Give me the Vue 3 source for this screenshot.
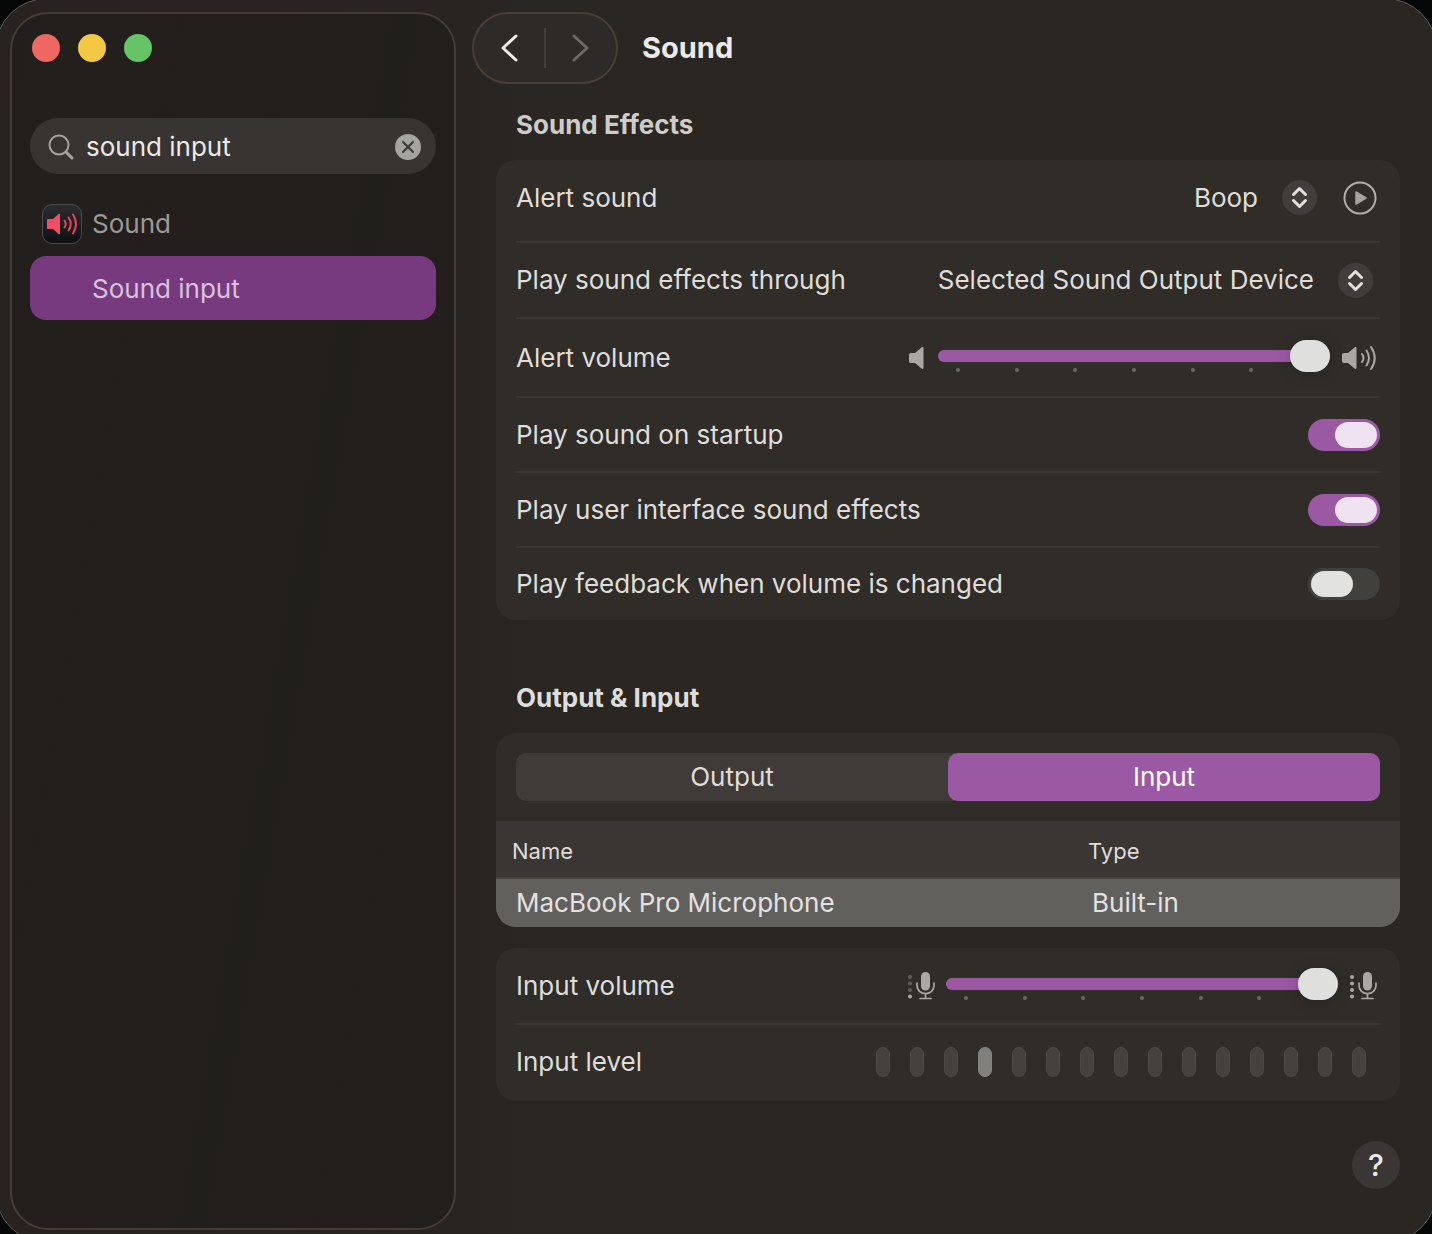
<script setup>
import { ref } from 'vue'

const query = ref('sound input')
const alertSound = ref('Boop')
const outputDevice = ref('Selected Sound Output Device')
const alertVolume = ref(100)
const inputVolume = ref(100)
const tab = ref('Input')
const level = 4

const toggles = ref([
  { id: 'startup', label: 'Play sound on startup', on: true },
  { id: 'interface', label: 'Play user interface sound effects', on: true },
  { id: 'feedback', label: 'Play feedback when volume is changed', on: false },
])
</script>

<template>
  <div class="desktop">
    <div class="window">
      <aside class="sidebar">
        <div class="lights">
          <button class="light red" aria-label="Close"></button>
          <button class="light yellow" aria-label="Minimize"></button>
          <button class="light green" aria-label="Zoom"></button>
        </div>
        <div class="search">
          <svg width="28" height="28" viewBox="0 0 28 28" fill="none" stroke="#a5a3a0" stroke-linecap="round">
            <circle cx="11" cy="12" r="9.5" stroke-width="2" />
            <path d="M18 19l6 6" stroke-width="3" />
          </svg>
          <input v-model="query" type="text" aria-label="Search" />
          <button class="clear" aria-label="Clear search" @click="query = ''">
            <svg width="26" height="26" viewBox="0 0 26 26">
              <circle cx="13" cy="13" r="13" fill="#a6a4a1" />
              <path d="M8 8l10 10M18 8L8 18" stroke="#393633" stroke-width="2" stroke-linecap="round" />
            </svg>
          </button>
        </div>
        <nav class="results">
          <a href="#sound" class="result">
            <span class="app-icon">
              <svg width="32" height="24" viewBox="0 0 32 24">
                <path d="M2 7h5l5.500-5c.7-.6 1.500-.2 1.500.7v18.600c0 .9-.8 1.300-1.500.7L7 17H2c-.9 0-1-.4-1-1V8c0-.6.1-1 1-1z" fill="#f54c66" />
                <g fill="none" stroke="#e2475f" stroke-width="2" stroke-linecap="round">
                  <path d="M18.500 8.500q2.500 3.500 0 7M22.500 5.500q4.500 6.500 0 13M27 2.500q6 9.500 0 19" />
                </g>
              </svg>
            </span>
            Sound
          </a>
          <a href="#input" class="result selected">Sound input</a>
        </nav>
      </aside>

      <main class="main">
        <header class="toolbar">
          <div class="pager">
            <button aria-label="Back">
              <svg width="20" height="32" viewBox="0 0 20 32"><path d="M17 4L4 16l13 12" stroke="#efedeb" /></svg>
            </button>
            <span class="rule"></span>
            <button aria-label="Forward">
              <svg width="20" height="32" viewBox="0 0 20 32"><path d="M3 4l13 12L3 28" stroke="#6c6966" /></svg>
            </button>
          </div>
          <h1>Sound</h1>
        </header>

        <div class="content">
          <h2 class="dim">Sound Effects</h2>
          <section class="card">
            <div class="row tall">
              <label for="alert-sound">Alert sound</label>
              <div class="controls end-play">
                <span class="popup">
                  <select id="alert-sound" v-model="alertSound"><option>Boop</option></select>
                  <svg class="updown" width="35" height="35" viewBox="0 0 35 35"><path d="M11.500 14.500l6-6 6 6M11.500 20.500l6 6 6-6" /></svg>
                </span>
                <button class="play" aria-label="Play alert sound">
                  <svg width="34" height="34" viewBox="0 0 34 34">
                    <circle cx="17" cy="17" r="15.500" fill="none" stroke="#b0aeab" stroke-width="2" />
                    <path d="M13 11l10 6-10 6z" fill="#a5a3a0" stroke="#a5a3a0" stroke-width="1.500" stroke-linejoin="round" />
                  </svg>
                </button>
              </div>
            </div>
            <div class="row device">
              <label for="device">Play sound effects through</label>
              <div class="controls end-popup">
                <span class="popup">
                  <select id="device" v-model="outputDevice"><option>Selected Sound Output Device</option></select>
                  <svg class="updown" width="35" height="35" viewBox="0 0 35 35"><path d="M11.500 14.500l6-6 6 6M11.500 20.500l6 6 6-6" /></svg>
                </span>
              </div>
            </div>
            <div class="row volume">
              <label for="alert-volume">Alert volume</label>
              <div class="controls slider-set">
                <svg width="18" height="24" viewBox="0 0 18 24"><path d="M3 7h4l6.500-5.500c.9-.8 2-.4 2 .8v19.400c0 1.200-1.100 1.600-2 .8L7 17H3c-1.500 0-2-.7-2-2V9c0-1.300.5-2 2-2z" fill="#aaa8a5" /></svg>
                <span class="slider">
                  <span class="ticks"><i v-for="n in 7" :key="n"></i></span>
                  <input id="alert-volume" v-model="alertVolume" type="range" min="0" max="100" :style="{ '--fill': alertVolume + '%' }" />
                </span>
                <svg width="35" height="26" viewBox="0 0 35 26">
                  <path d="M2 8h4l6.500-5.500c.9-.8 2-.4 2 .8v19.400c0 1.200-1.100 1.600-2 .8L6 18H2c-1.500 0-2-.7-2-2v-6c0-1.300.5-2 2-2z" fill="#aaa8a5" />
                  <path d="M20 9q3 4 0 8M24.500 5.500q5 7.500 0 15M29 2q7.500 11 0 22" fill="none" stroke="#aaa8a5" stroke-width="2" stroke-linecap="round" />
                </svg>
              </div>
            </div>
            <div v-for="t in toggles" :key="t.id" class="row">
              <label :for="t.id">{{ t.label }}</label>
              <input :id="t.id" v-model="t.on" class="switch" type="checkbox" role="switch" />
            </div>
          </section>

          <h2 class="second">Output &amp; Input</h2>
          <section class="card">
            <div class="segments">
              <button v-for="name in ['Output', 'Input']" :key="name" :class="{ active: tab === name }" @click="tab = name">{{ name }}</button>
            </div>
            <table>
              <thead>
                <tr><th class="name">Name</th><th>Type</th></tr>
              </thead>
              <tbody>
                <tr><td>MacBook Pro Microphone</td><td>Built-in</td></tr>
              </tbody>
            </table>
          </section>

          <section class="card levels">
            <div class="row input-row">
              <label for="input-volume">Input volume</label>
              <div class="controls slider-set mic">
                <svg width="28" height="28" viewBox="0 0 28 28" fill="#aaa8a5">
                  <g fill="#605d5a"><circle cx="3" cy="5" r="2" /><circle cx="3" cy="11.500" r="2" /><circle cx="3" cy="18" r="2" /></g>
                  <circle cx="3" cy="24.500" r="2" />
                  <rect x="14" y="0" width="9" height="18.500" rx="4.500" />
                  <path d="M10 11v2.500a8.300 8 0 0 0 17 0V11M18.500 22v4M13 26.500h11" fill="none" stroke="#aaa8a5" stroke-width="1.700" stroke-linecap="round" />
                </svg>
                <span class="slider">
                  <span class="ticks"><i v-for="n in 7" :key="n"></i></span>
                  <input id="input-volume" v-model="inputVolume" type="range" min="0" max="100" :style="{ '--fill': inputVolume + '%' }" />
                </span>
                <svg width="28" height="28" viewBox="0 0 28 28" fill="#aaa8a5">
                  <circle cx="3" cy="5" r="2" /><circle cx="3" cy="11.500" r="2" /><circle cx="3" cy="18" r="2" /><circle cx="3" cy="24.500" r="2" />
                  <rect x="14" y="0" width="9" height="18.500" rx="4.500" />
                  <path d="M10 11v2.500a8.300 8 0 0 0 17 0V11M18.500 22v4M13 26.500h11" fill="none" stroke="#aaa8a5" stroke-width="1.700" stroke-linecap="round" />
                </svg>
              </div>
            </div>
            <div class="row level-row">
              <span id="level-label">Input level</span>
              <div class="meter" role="meter" aria-labelledby="level-label" aria-valuemin="0" aria-valuemax="15" :aria-valuenow="level">
                <i v-for="n in 15" :key="n" :class="{ lit: n === level }"></i>
              </div>
            </div>
          </section>

          <button class="help" aria-label="Help">?</button>
        </div>
      </main>
    </div>
  </div>
</template>

<style>
body {
  background: #050606;
}
</style>

<style scoped>
* {
  box-sizing: border-box;
}
.desktop {
  min-height: 100vh;
  overflow: hidden;
  background: #050606;
  color: #dfddda;
  font-family: Inter, "Liberation Sans", sans-serif;
  font-size: 26px;
  line-height: 32px;
}
.window {
  display: flex;
  min-height: calc(100vh + 11px);
  margin: -2px -5px -9px;
  padding: 13px 36px 12px 14px;
  border: 1px solid #5b5957;
  border-radius: 52px;
  background: linear-gradient(90deg, #282320, #282421 480px, #2a2622 540px);
}
button,
input,
select {
  margin: 0;
  padding: 0;
  border: 0;
  background: none;
  color: inherit;
  font: inherit;
}
svg {
  display: block;
  flex: none;
}

/* Sidebar */
.sidebar {
  flex: none;
  width: 446px;
  padding: 20px 18px;
  border: 2px solid #463b35;
  border-radius: 38px;
  background: linear-gradient(100deg, #211f1c, #241e1c 35%, #211f1c 60%, #241e1c 85%, #211f1c);
}
.lights {
  display: flex;
  gap: 18px;
  padding-left: 2px;
}
.light {
  width: 28px;
  height: 28px;
  border-radius: 50%;
}
.red {
  background: #ee6763;
}
.yellow {
  background: #f3c944;
}
.green {
  background: #65c466;
}
.search {
  display: flex;
  align-items: center;
  height: 56px;
  margin: 56px 0 18px;
  padding: 2px 15px 0 18px;
  border-radius: 28px;
  background: #373432;
}
.search input {
  flex: 1;
  min-width: 0;
  margin-left: 10px;
  outline: 0;
  color: #eceae8;
}
.result {
  display: flex;
  align-items: center;
  gap: 10px;
  height: 64px;
  padding-left: 12px;
  border-radius: 16px;
  color: #9c9996;
  text-decoration: none;
}
.selected {
  padding: 2px 0 0 62px;
  background: #773a7f;
  color: #d9c2dc;
}
.app-icon {
  display: grid;
  place-items: center;
  width: 40px;
  height: 40px;
  border: 1px solid #4a4b4b;
  border-radius: 10px;
  background: linear-gradient(#2b2d2e, #0f1011);
}

/* Toolbar */
.main {
  flex: 1;
  min-width: 0;
}
.toolbar {
  display: flex;
  align-items: center;
  gap: 24px;
  padding-left: 16px;
}
.pager {
  display: flex;
  align-items: center;
  width: 146px;
  height: 72px;
  border: 2px solid #493e36;
  border-radius: 36px;
  background: #2e2a27;
}
.pager button {
  flex: 1;
  display: grid;
  place-items: center;
}
.pager path {
  fill: none;
  stroke-width: 3;
  stroke-linecap: round;
  stroke-linejoin: round;
}
.rule {
  width: 2px;
  height: 40px;
  background: #403d3a;
}
h1,
h2 {
  margin: 0;
  font-weight: 700;
}
h1 {
  color: #eceae8;
  font-size: 29px;
}

/* Settings */
.content {
  padding-left: 40px;
}
h2 {
  padding: 25px 20px 19px;
  font-size: 26px;
}
.dim {
  color: #cfcbc9;
}
.second {
  padding-top: 62px;
}
.card {
  overflow: hidden;
  border-radius: 20px;
  background: #302d29;
}
.row {
  display: flex;
  align-items: center;
  justify-content: space-between;
  height: 75px;
  margin: 0 20px;
  border-bottom: 2px solid #393633;
}
.row:last-child {
  height: 72px;
  border-bottom: 0;
}
.tall {
  height: 83px;
  padding-bottom: 6px;
}
.device {
  height: 76px;
}
.volume {
  height: 79px;
}
.controls {
  display: flex;
  align-items: center;
}
.end-play {
  gap: 26px;
  padding-right: 3px;
}
.end-popup {
  padding-right: 7px;
}
.popup {
  position: relative;
  display: flex;
  align-items: center;
}
.popup select {
  height: 35px;
  padding-right: 59px;
  appearance: none;
  field-sizing: content;
}
.updown {
  position: absolute;
  right: 0;
  border-radius: 50%;
  background: #403d3a;
  fill: none;
  stroke: #e4e2df;
  stroke-width: 3;
  stroke-linecap: round;
  stroke-linejoin: round;
  pointer-events: none;
}
.slider-set {
  gap: 12px;
  padding-right: 3px;
}
.mic {
  gap: 11px;
}
.slider {
  position: relative;
  width: 392px;
  height: 32px;
  margin-bottom: 4px;
}
.slider input {
  position: relative;
  display: block;
  width: 100%;
  height: 32px;
  appearance: none;
}
.slider input::-webkit-slider-runnable-track {
  height: 12px;
  border-radius: 6px;
  background: linear-gradient(90deg, #9c59a3 var(--fill), #45423f var(--fill));
}
.slider input::-webkit-slider-thumb {
  width: 40px;
  height: 32px;
  margin-top: -10px;
  border-radius: 16px;
  background: #dfdfde;
  box-shadow: 0 2px 16px rgba(0, 0, 0, 0.2);
  appearance: none;
}
.ticks {
  position: absolute;
  inset: 28px 18px auto;
  display: flex;
  justify-content: space-between;
}
.ticks i {
  width: 4px;
  height: 4px;
  border-radius: 50%;
  background: #6b6865;
}
.switch {
  width: 72px;
  height: 32px;
  padding: 3px;
  border-radius: 16px;
  background: #41403d;
  appearance: none;
}
.switch::before {
  content: "";
  display: block;
  width: 42px;
  height: 26px;
  border-radius: 13px;
  background: #e2e2e1;
}
.switch:checked {
  background: #9c59a3;
}
.switch:checked::before {
  margin-left: 24px;
  background: #efe3f1;
}

/* Devices */
.segments {
  display: flex;
  margin: 20px;
  border-radius: 10px;
  background: #3e3b38;
}
.segments button {
  flex: 1;
  height: 48px;
  border-radius: 10px;
}
.segments .active {
  background: #9c59a3;
  color: #fff;
}
table {
  width: 100%;
  border-collapse: separate;
  border-spacing: 0;
  table-layout: fixed;
}
th {
  height: 58px;
  padding: 4px 16px 0;
  border-bottom: 2px solid #44423e;
  background: #3a3633;
  font-size: 22px;
  font-weight: 400;
  text-align: left;
}
.name {
  width: 576px;
}
td {
  height: 48px;
  padding: 0 20px;
  background: #61605d;
  color: #e4e2e0;
}
.levels {
  margin-top: 21px;
}
.input-row {
  height: 77px;
}
.level-row:last-child {
  height: 76px;
  padding-bottom: 2px;
}
.meter {
  display: flex;
  gap: 20px;
  padding-right: 14px;
}
.meter i {
  width: 14px;
  height: 30px;
  border: 1px solid #4c4946;
  border-radius: 7px;
  background: #45423e;
}
.meter .lit {
  border-color: #858380;
  background: #82807d;
}
.help {
  display: block;
  width: 48px;
  height: 48px;
  margin: 40px 0 0 auto;
  border-radius: 50%;
  background: #3a3633;
  color: #eceae8;
  font-size: 30px;
  font-weight: 500;
}
</style>
